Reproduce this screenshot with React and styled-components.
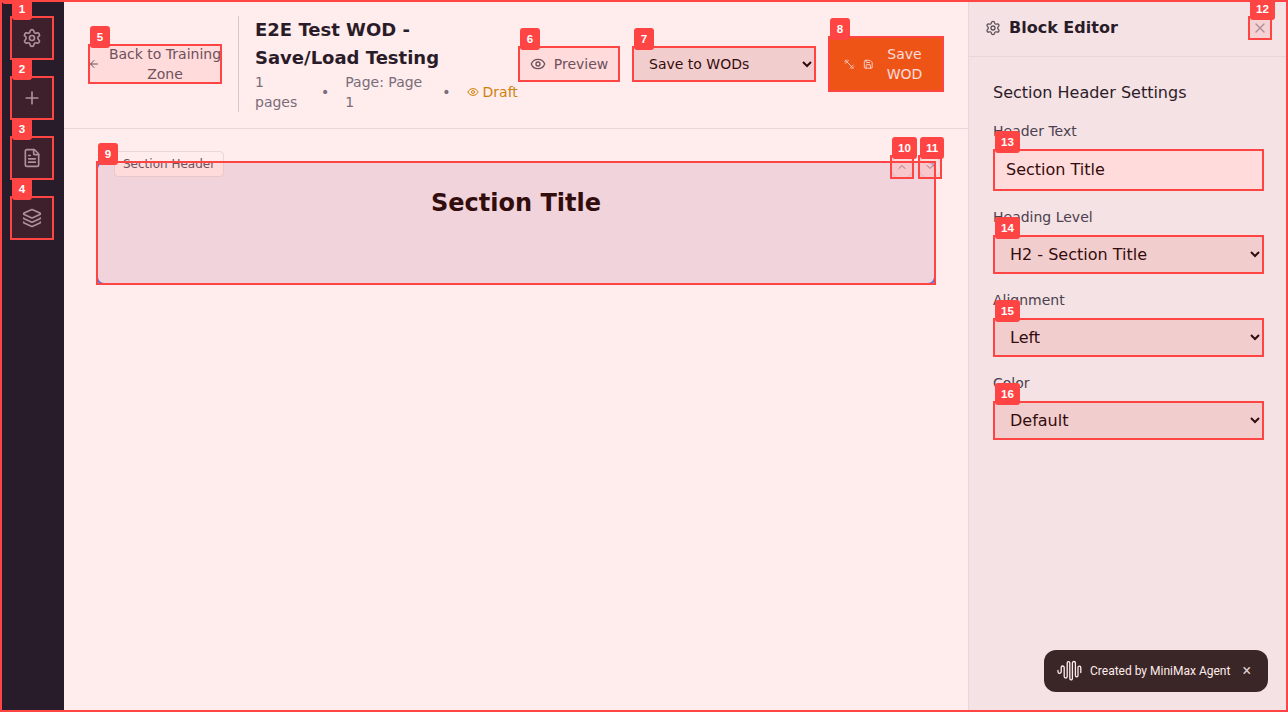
import React from "react";
import styled, { createGlobalStyle, css } from "styled-components";
import { Settings, Plus, FileText, Layers, ArrowLeft, Eye, Save, X, ChevronUp, ChevronDown } from "lucide-react";

const Global = createGlobalStyle`
  *, *::before, *::after { box-sizing: border-box; }
  body { margin: 0; font-family: "DejaVu Sans", sans-serif; font-size: 16px; line-height: 24px; color: #111827; background: #fff; }
  button, input, select { font-family: inherit; margin: 0; }
  h1, h2, h3, p { margin: 0; }
`;

const red = "#ff4444";

const Shell = styled.div`
  position: relative;
  display: flex;
  width: 100%;
  height: 100vh;
  overflow: hidden;
`;

const Frame = styled.div`
  position: absolute;
  inset: 0;
  z-index: ${(p) => (p.$page ? 10 : 20)};
  border: 2px solid ${red};
  background: rgba(255, 68, 68, 0.1);
  pointer-events: none;
`;

const Tag = styled.span`
  position: absolute;
  left: 2px;
  top: -18px;
  z-index: 30;
  min-width: 20px;
  height: 22px;
  padding: 4px 6px;
  border-radius: 3px;
  background: ${red};
  color: #fff;
  font-family: "Liberation Sans", Arial, sans-serif;
  font-size: 11.6px;
  font-weight: 700;
  line-height: 14px;
  text-align: center;
  pointer-events: none;
`;

function Mark({ n, page }) {
  return (
    <>
      <Frame $page={page} />
      <Tag>{n}</Tag>
    </>
  );
}

const Holder = styled.div`
  position: relative;
  display: flex;
  flex: 0 0 auto;
  width: ${(p) => p.$width || "auto"};
`;

const Sidebar = styled.nav`
  display: flex;
  flex-direction: column;
  align-items: center;
  gap: 16px;
  flex: 0 0 64px;
  padding-top: 16px;
  background: #111827;
`;

const bare = css`
  display: flex;
  align-items: center;
  justify-content: center;
  border: 0;
  background: transparent;
`;

const NavButton = styled.button`
  ${bare}
  width: 44px;
  height: 44px;
  padding: 0;
  color: #9ca3af;
`;

const Main = styled.main`
  display: flex;
  flex-direction: column;
  flex: 1;
  min-width: 0;
`;

const TopBar = styled.header`
  display: flex;
  align-items: center;
  height: 129px;
  padding: 16px 24px;
  border-bottom: 1px solid #e5e7eb;
`;

const BackButton = styled.button`
  ${bare}
  width: 134px;
  height: 40px;
  padding: 0;
  gap: 8px;
  color: #4b5563;
  font-size: 14px;
  line-height: 20px;
  svg { flex: 0 0 12px; }
`;

const Divider = styled.div`
  width: 1px;
  height: 96px;
  margin: 0 16px;
  background: #d1d5db;
`;

const TitleGroup = styled.div`
  width: 263px;
`;

const Title = styled.h1`
  width: 200px;
  font-size: 18px;
  line-height: 28px;
  font-weight: 700;
`;

const Meta = styled.div`
  display: flex;
  align-items: center;
  gap: 16px;
  font-size: 14px;
  line-height: 20px;
  color: #6b7280;
`;

const MetaText = styled.span`
  width: ${(p) => p.$width}px;
`;

const Draft = styled.span`
  display: flex;
  align-items: center;
  gap: 4px;
  color: #ca8a04;
`;

const Actions = styled.div`
  display: flex;
  align-items: center;
  gap: 12px;
`;

const PreviewButton = styled.button`
  ${bare}
  width: 102px;
  height: 36px;
  padding: 0;
  gap: 8px;
  color: #4b5563;
  font-size: 14px;
  line-height: 20px;
`;

const Select = styled.select`
  width: 100%;
  height: ${(p) => p.$height}px;
  padding: 0 12px;
  border: 1px solid #d1d5db;
  border-radius: 4px;
  background-color: #efefef;
  color: #000;
  font-size: ${(p) => p.$size || 16}px;
`;

const SaveButton = styled.button`
  ${bare}
  width: 116px;
  height: 56px;
  padding: 0 16px;
  border-radius: 4px;
  background: #ea580c;
  color: #fff;
  font-size: 14px;
  line-height: 20px;
  gap: 8px;
  svg { flex: 0 0 10.5px; }
  span { flex: 1; }
`;

const Canvas = styled.section`
  flex: 1;
  padding: 32px;
`;

const Block = styled.div`
  position: relative;
  height: 124px;
  padding: 24px 16px;
  border: 2px solid #3b82f6;
  border-radius: 8px;
  background: #eff6ff;
`;

const BlockFrame = styled.div`
  position: absolute;
  inset: -2px;
`;

const BlockTitle = styled.h2`
  font-size: 24px;
  line-height: 32px;
  font-weight: 700;
  text-align: center;
  color: #000;
`;

const Chip = styled.span`
  position: absolute;
  left: 16px;
  top: -12px;
  padding: 4px 8px;
  height: 26px;
  border: 1px solid #e5e7eb;
  border-radius: 4px;
  background: #fff;
  color: #4b5563;
  font-size: 12px;
  line-height: 16px;
  white-space: nowrap;
`;

const Movers = styled.div`
  position: absolute;
  top: -8px;
  right: -8px;
  display: flex;
  gap: 4px;
`;

const MoveButton = styled.button`
  ${bare}
  width: 24px;
  height: 24px;
  padding: 0;
  border: 1px solid #d1d5db;
  border-radius: 50%;
  background: #fff;
  color: #111827;
  opacity: 0.5;
`;

const Panel = styled.aside`
  flex: 0 0 320px;
  border-left: 1px solid #e5e7eb;
  background: #f3f4f6;
`;

const PanelHead = styled.div`
  display: flex;
  align-items: center;
  gap: 8px;
  height: 57px;
  padding: 16px;
  border-bottom: 1px solid #e5e7eb;
  color: #4b5563;
`;

const PanelTitle = styled.h2`
  flex: 1;
  font-size: 16px;
  line-height: 24px;
  color: #111827;
`;

const CloseButton = styled.button`
  ${bare}
  width: 24px;
  height: 24px;
  padding: 4px;
  color: #9ca3af;
`;

const PanelBody = styled.div`
  display: flex;
  flex-direction: column;
  gap: 16px;
  padding: 24px;
`;

const SettingsTitle = styled.h3`
  font-size: 16px;
  line-height: 24px;
  font-weight: 500;
`;

const Field = styled.div`
  display: flex;
  flex-direction: column;
  gap: 8px;
`;

const Label = styled.label`
  font-size: 14px;
  line-height: 20px;
  color: #374151;
`;

const Input = styled.input`
  width: 100%;
  height: 42px;
  padding: 7px 12px 9px;
  border: 1px solid #d1d5db;
  border-radius: 4px;
  background: #fff;
  color: #000;
  font-size: 16px;
`;

const Credit = styled.div`
  position: absolute;
  right: 20px;
  bottom: 20px;
  display: flex;
  align-items: center;
  width: 224px;
  height: 42px;
  padding: 0 12px 0 13px;
  border-radius: 12px;
  background: #242323;
  color: #fff;
  font: 400 12px/18px Roboto, sans-serif;
  white-space: nowrap;
  svg { margin-right: 8px; }
`;

const CreditText = styled.span`
  width: 140px;
`;

const CreditClose = styled.span`
  margin-left: 12.5px;
  color: #ddd;
  font-size: 16px;
`;

function Barbell() {
  return (
    <svg width="10.5" height="10.5" viewBox="0 0 24 24" fill="none" stroke="currentColor" strokeWidth="2" strokeLinecap="round" strokeLinejoin="round">
      <path d="m6.500 6.500 11 11" />
      <path d="m21 21-1-1" />
      <path d="m3 3 1 1" />
      <path d="m18 22 4-4" />
      <path d="m2 6 4-4" />
      <path d="m3 10 7-7" />
      <path d="m14 21 7-7" />
    </svg>
  );
}

function WaveLogo() {
  return (
    <svg width="25" height="22" viewBox="0 0 25 22" fill="none" stroke="currentColor" strokeWidth="1.3" strokeLinecap="round">
      <path d="M1 10.500v1.200a1.600 1.600 0 0 0 3.200 0V7.500a1.500 1.500 0 0 1 3 0v9a1.500 1.500 0 0 0 3 0V3a1.300 1.300 0 0 1 2.600 0v15.500a1.300 1.300 0 0 0 2.600 0V3a1.500 1.500 0 0 1 3 0v12.500a1.300 1.300 0 0 0 2.600 0V7.500a1.400 1.400 0 0 1 2.800 0v5" />
    </svg>
  );
}

const nav = [Settings, Plus, FileText, Layers];
const selects = [
  ["Heading Level", "H2 - Section Title"],
  ["Alignment", "Left"],
  ["Color", "Default"],
];

export default function App() {
  return (
    <Shell>
      <Global />
      <Sidebar>
        {nav.map((Icon, i) => (
          <Holder key={i}>
            <NavButton><Icon size={20} /></NavButton>
            <Mark n={i + 1} />
          </Holder>
        ))}
      </Sidebar>
      <Main>
        <TopBar>
          <Holder>
            <BackButton><ArrowLeft size={12} /><span>Back to Training Zone</span></BackButton>
            <Mark n={5} />
          </Holder>
          <Divider />
          <TitleGroup>
            <Title>E2E Test WOD - Save/Load Testing</Title>
            <Meta>
              <MetaText $width={50}>1 pages</MetaText>
              <span>•</span>
              <MetaText $width={81}>Page: Page 1</MetaText>
              <span>•</span>
              <Draft><Eye size={12} />Draft</Draft>
            </Meta>
          </TitleGroup>
          <Actions>
            <Holder>
              <PreviewButton><Eye size={16} />Preview</PreviewButton>
              <Mark n={6} />
            </Holder>
            <Holder $width="184px">
              <Select $height={36} $size={14}><option>Save to WODs</option></Select>
              <Mark n={7} />
            </Holder>
            <Holder>
              <SaveButton><Barbell /><Save size={10.5} /><span>Save WOD</span></SaveButton>
              <Mark n={8} />
            </Holder>
          </Actions>
        </TopBar>
        <Canvas>
          <Block>
            <BlockTitle>Section Title</BlockTitle>
            <Chip>Section Header</Chip>
            <BlockFrame><Mark n={9} /></BlockFrame>
            <Movers>
              <Holder>
                <MoveButton><ChevronUp size={12} /></MoveButton>
                <Mark n={10} />
              </Holder>
              <Holder>
                <MoveButton><ChevronDown size={12} /></MoveButton>
                <Mark n={11} />
              </Holder>
            </Movers>
          </Block>
        </Canvas>
      </Main>
      <Panel>
        <PanelHead>
          <Settings size={16} />
          <PanelTitle>Block Editor</PanelTitle>
          <Holder>
            <CloseButton><X size={16} /></CloseButton>
            <Mark n={12} />
          </Holder>
        </PanelHead>
        <PanelBody>
          <SettingsTitle>Section Header Settings</SettingsTitle>
          <Field>
            <Label>Header Text</Label>
            <Holder><Input defaultValue="Section Title" /><Mark n={13} /></Holder>
          </Field>
          {selects.map(([label, value], i) => (
            <Field key={label}>
              <Label>{label}</Label>
              <Holder>
                <Select $height={39}><option>{value}</option></Select>
                <Mark n={14 + i} />
              </Holder>
            </Field>
          ))}
        </PanelBody>
      </Panel>
      <Credit>
        <WaveLogo />
        <CreditText>Created by MiniMax Agent</CreditText>
        <CreditClose>×</CreditClose>
      </Credit>
      <Mark n={0} page />
    </Shell>
  );
}
